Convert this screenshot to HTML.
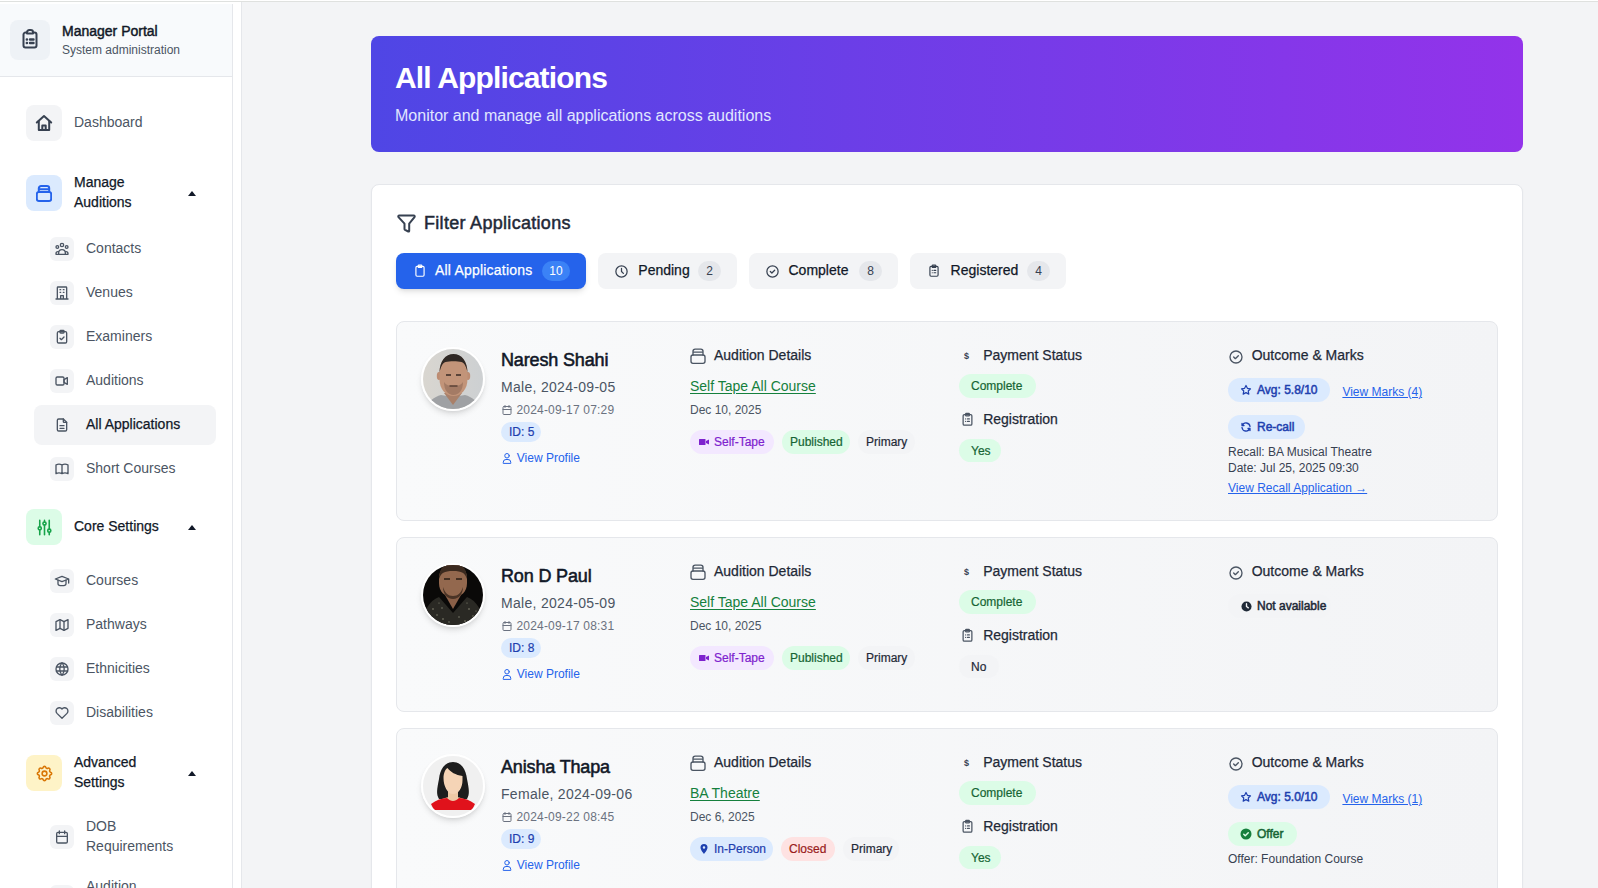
<!DOCTYPE html>
<html><head><meta charset="utf-8">
<style>
*{box-sizing:border-box;margin:0;padding:0}
html,body{width:1598px;height:888px;overflow:hidden;background:#fff;font-family:"Liberation Sans",sans-serif;color:#111827}
.a{position:absolute}
.t{position:absolute;white-space:nowrap;line-height:1}
svg{display:block}
.ic{position:absolute;fill:none;stroke:currentColor;stroke-width:2;stroke-linecap:round;stroke-linejoin:round}
#topline{position:absolute;left:0;top:1px;width:1598px;height:1px;background:#dfe1df}
#side{position:absolute;left:0;top:4px;width:233px;height:884px;border-right:1px solid #e5e7eb;background:#fff}
#shead{position:absolute;left:0;top:4px;width:232px;height:73px;background:#f8fafc;border-bottom:1px solid #e5e7eb}
#main{position:absolute;left:241px;top:2px;width:1357px;height:886px;border-left:1px solid #e5e7eb;background:#f3f4f6}
.nb{position:absolute;left:26px;width:36px;height:36px;border-radius:8px}
.sb{position:absolute;left:50px;width:24px;height:24px;border-radius:6px;background:#f3f4f6;color:#4b5563}
.nt{font-size:14px;color:#4b5563}
.ht{font-size:14px;color:#111827;-webkit-text-stroke:0.25px #111827}
.caret{position:absolute;left:188px;width:0;height:0;border-left:4.5px solid transparent;border-right:4.5px solid transparent;border-bottom:5px solid #111827}

.card{position:absolute;left:396px;width:1102px;border:1px solid #e5e7eb;border-radius:8px;background:linear-gradient(to right,#f9fafb,#f3f4f6)}
.bdg{position:absolute;display:flex;align-items:center;white-space:nowrap;font-size:12px;line-height:1;border-radius:12px;-webkit-text-stroke:0.2px currentColor}
.fb{position:absolute;top:253px;height:36px;border-radius:8px;background:#f3f4f6;color:#374151}
.fbt{position:absolute;top:262.8px;font-size:14px;line-height:1;white-space:nowrap;-webkit-text-stroke:0.25px currentColor}
.cnt{position:absolute;top:261px;height:20px;border-radius:10px;background:#e5e7eb;font-size:12px;line-height:20px;text-align:center;color:#374151}
.hd{font-size:14px;color:#1f2937}
.lnk{text-decoration:underline;text-underline-offset:1.5px}
.av{position:absolute;left:421px;width:64px;height:64px;border-radius:50%;border:2px solid #fff;box-shadow:0 4px 6px -1px rgba(0,0,0,.12),0 2px 4px -2px rgba(0,0,0,.1);overflow:hidden}
.fill{fill:currentColor;stroke:none}
.md{-webkit-text-stroke:0.25px currentColor}
</style></head><body>
<div id="topline"></div>
<div id="side"></div>
<div id="shead"></div>
<div id="main"></div>

<!-- SIDEBAR -->
<div class="a" style="left:10px;top:20px;width:40px;height:40px;border-radius:8px;background:#eef2f6;color:#374151">
  <svg class="ic" style="left:11px;top:9px" width="18" height="20" viewBox="0 0 18 20" stroke-width="2.2"><path d="M6 3.5H4.5A2 2 0 0 0 2.5 5.5v11a2 2 0 0 0 2 2h9a2 2 0 0 0 2-2v-11a2 2 0 0 0-2-2H12"/><path d="M6 4.5V3.3A2.3 2.3 0 0 1 8.3 1h1.4A2.3 2.3 0 0 1 12 3.3v1.2z"/><path d="M5.8 10.5h.2M9 10.5h3.5M5.8 14h.2M9 14h3.5" stroke-width="2.4"/></svg>
</div>
<div class="t" style="left:62px;top:24.4px;font-size:14px;color:#111827;-webkit-text-stroke:0.45px #111827">Manager Portal</div>
<div class="t" style="left:62px;top:43.6px;font-size:12px;color:#4b5563">System administration</div>

<div class="nb" style="top:105px;background:#f3f4f6;color:#374151"><svg class="ic" style="left:9px;top:9px" width="18" height="18" viewBox="0 0 18 18" stroke-width="1.9"><path d="M1.8 8.5L9 2l7.2 6.5"/><path d="M3.8 7v9h10.4V7"/><path d="M7.3 16v-4.5h3.4V16"/></svg></div>
<div class="t nt" style="left:74px;top:115.1px">Dashboard</div>

<div class="nb" style="top:175px;background:#dbeafe;color:#2563eb"><svg class="ic" style="left:10px;top:9.5px" width="16" height="17" viewBox="0 0 16 17" stroke-width="1.6"><rect x="0.8" y="7" width="14.4" height="9" rx="2"/><path d="M2.8 7V3.3A2.3 2.3 0 0 1 5.1 1h5.8a2.3 2.3 0 0 1 2.3 2.3V7M2.8 4.2h10.4"/></svg></div>
<div class="t ht" style="left:74px;top:175.1px">Manage</div>
<div class="t ht" style="left:74px;top:195.1px">Auditions</div>
<div class="caret" style="top:191px"></div>
<!-- submenu 1 -->
<div class="a" style="left:34px;top:405px;width:182px;height:40px;border-radius:8px;background:#f3f4f6"></div>
<div class="sb" style="top:237px"><svg class="ic" style="left:4px;top:4px" width="16" height="16" viewBox="0 0 24 24" stroke-width="1.9"><circle cx="12" cy="6" r="2.5"/><circle cx="5" cy="9" r="2"/><circle cx="19" cy="9" r="2"/><path d="M7 20v-2a5 5 0 0 1 10 0v2zM3 20v-1a3 3 0 0 1 3-3M21 20v-1a3 3 0 0 0-3-3M3 20h18"/></svg></div>
<div class="t nt" style="left:86px;top:241.2px">Contacts</div>
<div class="sb" style="top:281px"><svg class="ic" style="left:4px;top:4px" width="16" height="16" viewBox="0 0 24 24" stroke-width="1.9"><path d="M3 21h18M5 21V4a1 1 0 0 1 1-1h12a1 1 0 0 1 1 1v17M9 7h1M14 7h1M9 11h1M14 11h1M10 21v-5h4v5"/></svg></div>
<div class="t nt" style="left:86px;top:285.2px">Venues</div>
<div class="sb" style="top:325px"><svg class="ic" style="left:4px;top:4px" width="16" height="16" viewBox="0 0 24 24" stroke-width="1.9"><rect x="5" y="4" width="14" height="17" rx="2"/><rect x="9" y="2" width="6" height="4" rx="1"/><path d="M9 14l2 2 4-4"/></svg></div>
<div class="t nt" style="left:86px;top:329.2px">Examiners</div>
<div class="sb" style="top:369px"><svg class="ic" style="left:4px;top:4px" width="16" height="16" viewBox="0 0 24 24" stroke-width="1.9"><path d="M15 10l5-3v10l-5-3z"/><rect x="3" y="6" width="12" height="12" rx="2"/></svg></div>
<div class="t nt" style="left:86px;top:373.2px">Auditions</div>
<div class="sb" style="top:413px"><svg class="ic" style="left:4px;top:4px" width="16" height="16" viewBox="0 0 24 24" stroke-width="1.9"><path d="M14 3v4a1 1 0 0 0 1 1h4"/><path d="M17 21H7a2 2 0 0 1-2-2V5a2 2 0 0 1 2-2h7l5 5v11a2 2 0 0 1-2 2zM9 13h6M9 17h6"/></svg></div>
<div class="t" style="left:86px;top:417.2px;font-size:14px;color:#111827;-webkit-text-stroke:0.25px #111827">All Applications</div>
<div class="sb" style="top:457px"><svg class="ic" style="left:4px;top:4px" width="16" height="16" viewBox="0 0 24 24" stroke-width="1.9"><path d="M3 19a9 9 0 0 1 9 0 9 9 0 0 1 9 0M3 6a9 9 0 0 1 9 0 9 9 0 0 1 9 0M3 6v13M12 6v13M21 6v13"/></svg></div>
<div class="t nt" style="left:86px;top:461.2px">Short Courses</div>

<div class="nb" style="top:509px;background:#dcfce7;color:#16a34a"><svg class="ic" style="left:8.5px;top:8.5px" width="19" height="19" viewBox="0 0 24 24" stroke-width="1.8"><path d="M6 3v8M6 15v6M12 3v2M12 9v12M18 3v11M18 18v3"/><circle cx="6" cy="13" r="2"/><circle cx="12" cy="7" r="2"/><circle cx="18" cy="16" r="2"/></svg></div>
<div class="t ht" style="left:74px;top:518.8px">Core Settings</div>
<div class="caret" style="top:525px"></div>

<div class="sb" style="top:569px"><svg class="ic" style="left:4px;top:4px" width="16" height="16" viewBox="0 0 24 24" stroke-width="1.9"><path d="M22 9L12 5 2 9l10 4 10-4v6"/><path d="M6 10.6V16a6 3 0 0 0 12 0v-5.4"/></svg></div>
<div class="t nt" style="left:86px;top:572.8px">Courses</div>
<div class="sb" style="top:613px"><svg class="ic" style="left:4px;top:4px" width="16" height="16" viewBox="0 0 24 24" stroke-width="1.9"><path d="M3 7l6-3 6 3 6-3v13l-6 3-6-3-6 3z"/><path d="M9 4v13M15 7v13"/></svg></div>
<div class="t nt" style="left:86px;top:616.8px">Pathways</div>
<div class="sb" style="top:657px"><svg class="ic" style="left:4px;top:4px" width="16" height="16" viewBox="0 0 24 24" stroke-width="1.9"><circle cx="12" cy="12" r="9"/><path d="M3.6 9h16.8M3.6 15h16.8M11.5 3a17 17 0 0 0 0 18M12.5 3a17 17 0 0 1 0 18"/></svg></div>
<div class="t nt" style="left:86px;top:660.8px">Ethnicities</div>
<div class="sb" style="top:701px"><svg class="ic" style="left:4px;top:4px" width="16" height="16" viewBox="0 0 24 24" stroke-width="1.9"><path d="M19.5 12.6L12 20l-7.5-7.4A5 5 0 1 1 12 6a5 5 0 1 1 7.5 6.6"/></svg></div>
<div class="t nt" style="left:86px;top:704.8px">Disabilities</div>

<div class="nb" style="top:755px;background:#fef3c7;color:#d97706"><svg class="ic" style="left:8.5px;top:8.5px" width="19" height="19" viewBox="0 0 24 24" stroke-width="1.8"><path d="M10.3 4.3c.4-1.8 3-1.8 3.4 0a1.7 1.7 0 0 0 2.6 1.1c1.5-.9 3.3.8 2.4 2.4a1.7 1.7 0 0 0 1 2.5c1.8.4 1.8 3 0 3.4a1.7 1.7 0 0 0-1 2.6c.9 1.5-.9 3.3-2.4 2.4a1.7 1.7 0 0 0-2.6 1c-.4 1.8-3 1.8-3.4 0a1.7 1.7 0 0 0-2.6-1c-1.5.9-3.3-.9-2.4-2.4a1.7 1.7 0 0 0-1-2.6c-1.8-.4-1.8-3 0-3.4a1.7 1.7 0 0 0 1-2.5c-.9-1.6.9-3.3 2.4-2.4a1.7 1.7 0 0 0 2.6-1.1z"/><circle cx="12" cy="12" r="3"/></svg></div>
<div class="t ht" style="left:74px;top:754.9px">Advanced</div>
<div class="t ht" style="left:74px;top:774.9px">Settings</div>
<div class="caret" style="top:771px"></div>

<div class="sb" style="top:825px"><svg class="ic" style="left:4px;top:4px" width="16" height="16" viewBox="0 0 24 24" stroke-width="1.9"><rect x="4" y="5" width="16" height="16" rx="2"/><path d="M16 3v4M8 3v4M4 11h16"/></svg></div>
<div class="t nt" style="left:86px;top:819px">DOB</div>
<div class="t nt" style="left:86px;top:838.6px">Requirements</div>
<div class="sb" style="top:885px"></div>
<div class="t nt" style="left:86px;top:879.2px">Audition</div>

<!-- MAIN -->
<div class="a" style="left:371px;top:36px;width:1152px;height:116px;border-radius:8px;background:linear-gradient(to right,#4f46e5,#9333ea)"></div>
<div class="t" style="left:395px;top:62.61px;font-size:30px;font-weight:bold;color:#fff;letter-spacing:-0.85px">All Applications</div>
<div class="t" style="left:395px;top:108.46px;font-size:16px;color:#e0e7ff">Monitor and manage all applications across auditions</div>
<div class="a" style="left:371px;top:184px;width:1152px;height:720px;border-radius:8px;background:#fff;border:1px solid #e5e7eb;box-shadow:0 1px 2px rgba(0,0,0,.04)"></div>
<svg class="ic" style="left:396.5px;top:213.5px;color:#374151" width="19" height="19" viewBox="0 0 19 19" stroke-width="1.7"><path d="M2.3 1.5h14.4a1 1 0 0 1 .8 1.6l-5.3 6.6v7.3a.6.6 0 0 1-.9.5L8 15.8a1 1 0 0 1-.5-.9V9.7L1.5 3.1a1 1 0 0 1 .8-1.6z"/></svg>
<div class="t" style="left:424px;top:213.56px;font-size:18px;color:#1f2937;-webkit-text-stroke:0.5px #1f2937;letter-spacing:0.3px">Filter Applications</div>
<div class="fb" style="left:396px;width:190px;background:#2563eb;box-shadow:0 4px 6px -1px rgba(0,0,0,.1),0 2px 4px -2px rgba(0,0,0,.1)"></div>
<svg class="ic" style="left:413px;top:264px;color:#fff" width="14" height="14" viewBox="0 0 24 24"><rect x="5" y="4" width="14" height="17" rx="2"/><rect x="9" y="2" width="6" height="4" rx="1"/></svg>
<div class="fbt" style="left:435px;color:#fff;letter-spacing:0.2px">All Applications</div>
<div class="cnt" style="left:542px;width:28px;background:#3b82f6;color:#fff">10</div>
<div class="fb" style="left:598px;width:139px"></div>
<svg class="ic" style="left:614px;top:264px;color:#374151" width="15" height="15" viewBox="0 0 24 24" stroke-width="2.2"><circle cx="12" cy="12" r="9"/><path d="M12 7v5l3 3"/></svg>
<div class="fbt" style="left:638.3px">Pending</div>
<div class="cnt" style="left:698px;width:23px">2</div>
<div class="fb" style="left:749px;width:149px"></div>
<svg class="ic" style="left:765px;top:264px;color:#374151" width="15" height="15" viewBox="0 0 24 24" stroke-width="2.2"><circle cx="12" cy="12" r="9"/><path d="M8.5 12l2.5 2.5 4.5-4.5"/></svg>
<div class="fbt" style="left:788.5px">Complete</div>
<div class="cnt" style="left:859px;width:23px">8</div>
<div class="fb" style="left:910px;width:156px"></div>
<svg class="ic" style="left:927px;top:264px;color:#374151" width="14" height="14" viewBox="0 0 24 24" stroke-width="2.2"><rect x="5" y="4" width="14" height="17" rx="2"/><rect x="9" y="2" width="6" height="4" rx="1"/><path d="M9 11h.01M12 11h3M9 15h.01M12 15h3"/></svg>
<div class="fbt" style="left:950.6px">Registered</div>
<div class="cnt" style="left:1027px;width:23px">4</div>
<div class="card" style="top:321px;height:200px"></div>
<div class="av" style="top:346.5px"><svg width="60" height="60" viewBox="0 0 60 60"><defs><linearGradient id="g1" x1="0" x2="1"><stop offset="0" stop-color="#d9d6d0"/><stop offset="1" stop-color="#cdd0d2"/></linearGradient></defs><rect width="60" height="60" fill="url(#g1)"/>
<path d="M4 60c1-8 7-12 14-14l12 2 12-2c7 2 13 6 14 14z" fill="#9fa1a4"/>
<path d="M21 44l9 12 9-12z" fill="#a98069"/>
<ellipse cx="16" cy="27" rx="2.2" ry="4" fill="#bd8c72"/><ellipse cx="45" cy="27" rx="2.2" ry="4" fill="#bd8c72"/>
<path d="M16.5 24c0-12 6-18 14-18s14 6 14 18v6c0 10-6 17-14 17s-14-7-14-17z" fill="#c29479"/>
<path d="M16.5 24c0-12 6-19 14-19s14 7 14 19c-1-6-3-10-6-11-4-1-12-1-16 0-3 1-5 5-6 11z" fill="#2f2824"/>
<path d="M21 33c2 3 5 4 9.5 4s7.5-1 9.5-4c0 8-4 13-9.5 13S21 41 21 33z" fill="#8f6a58" opacity=".6"/><path d="M26.5 37h8" stroke="#5a4036" stroke-width="1.3"/>
<path d="M23 26h5M33 26h5" stroke="#3a2a24" stroke-width="1.6"/>
</svg></div>
<div class="t" style="left:501px;top:350.56px;font-size:18px;color:#111827;-webkit-text-stroke:0.55px #111827;letter-spacing:-0.15px">Naresh Shahi</div>
<div class="t" style="left:501px;top:379.95px;font-size:14px;color:#4b5563;letter-spacing:0.3px">Male, 2024-09-05</div>
<svg class="ic" style="left:501px;top:404px;color:#6b7280" width="12" height="12" viewBox="0 0 24 24" stroke-width="2"><rect x="4" y="5" width="16" height="16" rx="2"/><path d="M16 3v4M8 3v4M4 11h16"/></svg>
<div class="t" style="left:516.4px;top:403.84px;font-size:12px;color:#6b7280;letter-spacing:0.2px">2024-09-17 07:29</div>
<div class="bdg" style="left:501px;top:422px;width:40px;height:20px;background:#dbeafe;color:#1e40af;padding-left:8px;border-radius:10.0px"><span>ID: 5</span></div>
<svg class="ic" style="left:501px;top:452px;color:#2563eb" width="12" height="12" viewBox="0 0 24 24" stroke-width="2"><circle cx="12" cy="7.5" r="4.5"/><path d="M4.5 22v-1.5a5.5 5.5 0 0 1 5.5-5.5h4a5.5 5.5 0 0 1 5.5 5.5V22z"/></svg>
<div class="t" style="left:516.8px;top:451.74px;font-size:12px;color:#2563eb">View Profile</div>
<svg class="ic" style="left:690px;top:348px;color:#4b5563" width="16" height="16" viewBox="0 0 24 24" stroke-width="2"><rect x="1.5" y="10.5" width="21" height="12.5" rx="3"/><path d="M4.5 10.5V5a3.3 3.3 0 0 1 3.3-3.3h8.4A3.3 3.3 0 0 1 19.5 5v5.5M4.5 6.3h15"/></svg>
<div class="t" style="left:714px;top:348.25px;font-size:14px;color:#1f2937;-webkit-text-stroke:0.25px #1f2937">Audition Details</div>
<div class="t" style="left:690px;top:378.85px;font-size:14px;color:#15803d;text-decoration:underline;text-underline-offset:2px">Self Tape All Course</div>
<div class="t" style="left:690px;top:403.84px;font-size:12px;color:#4b5563">Dec 10, 2025</div>
<div class="bdg" style="left:690px;top:430px;width:84px;height:24px;background:#f3e8ff;color:#7e22ce;padding-left:8px;border-radius:12.0px"><svg width="12" height="12" viewBox="0 0 24 24" style="margin-right:4px"><rect x="2" y="6" width="13" height="12" rx="1" fill="currentColor"/><path d="M16 10l6-3v10l-6-3z" fill="currentColor"/></svg><span>Self-Tape</span></div>
<div class="bdg" style="left:782px;top:430px;width:68px;height:24px;background:#dcfce7;color:#166534;padding-left:8px;border-radius:12.0px"><span>Published</span></div>
<div class="bdg" style="left:858px;top:430px;width:57px;height:24px;background:#f3f4f6;color:#1f2937;padding-left:8px;border-radius:12.0px"><span>Primary</span></div>
<div class="t" style="left:964px;top:351.68px;font-size:9px;font-weight:bold;color:#374151">$</div>
<div class="t" style="left:983.2px;top:348.25px;font-size:14px;color:#1f2937;-webkit-text-stroke:0.25px #1f2937">Payment Status</div>
<div class="bdg" style="left:959px;top:374px;width:77px;height:24px;background:#dcfce7;color:#166534;padding-left:12px;border-radius:12.0px"><span>Complete</span></div>
<svg class="ic" style="left:960px;top:412px;color:#4b5563" width="15" height="15" viewBox="0 0 24 24" stroke-width="2"><rect x="5" y="4" width="14" height="17" rx="2"/><rect x="9" y="2" width="6" height="4" rx="1"/><path d="M9 11h.01M12 11h3M9 15h.01M12 15h3"/></svg>
<div class="t" style="left:983.2px;top:412.25px;font-size:14px;color:#1f2937;-webkit-text-stroke:0.25px #1f2937">Registration</div>
<div class="bdg" style="left:959px;top:439px;width:42px;height:23px;background:#dcfce7;color:#166534;padding-left:12px;border-radius:11.5px"><span>Yes</span></div>
<svg class="ic" style="left:1228px;top:348.5px;color:#4b5563" width="16" height="16" viewBox="0 0 24 24" stroke-width="1.8"><circle cx="12" cy="12" r="9"/><path d="M8.5 12l2.5 2.5 4.5-4.5"/></svg>
<div class="t" style="left:1251.7px;top:347.95px;font-size:14px;color:#1f2937;-webkit-text-stroke:0.25px #1f2937">Outcome &amp; Marks</div>
<div class="bdg" style="left:1228px;top:378px;width:102px;height:24px;background:#dbeafe;color:#1e40af;-webkit-text-stroke:0.5px currentColor;padding-left:12px;border-radius:12.0px"><svg width="12" height="12" viewBox="0 0 24 24" style="margin-right:5px;fill:none;stroke:currentColor;stroke-width:2.4;stroke-linejoin:round"><path d="M12 3l2.8 5.7 6.2.9-4.5 4.4 1.1 6.2L12 17.3 6.4 20.2l1.1-6.2L3 9.6l6.2-.9z"/></svg><span>Avg: 5.8/10</span></div>
<div class="t" style="left:1342.4px;top:386.04px;font-size:12px;color:#2563eb;text-decoration:underline;text-underline-offset:1px">View Marks (4)</div>
<div class="bdg" style="left:1228px;top:415px;width:77px;height:24px;background:#dbeafe;color:#1e40af;-webkit-text-stroke:0.5px currentColor;padding-left:12px;border-radius:12.0px"><svg width="12" height="12" viewBox="0 0 24 24" style="margin-right:5px;fill:none;stroke:currentColor;stroke-width:2.6;stroke-linecap:round;stroke-linejoin:round"><path d="M20 11A8 8 0 0 0 4.6 9M4 5v4h4M4 13a8 8 0 0 0 15.4 2M20 19v-4h-4"/></svg><span>Re-call</span></div>
<div class="t" style="left:1228px;top:445.54px;font-size:12px;color:#374151">Recall: BA Musical Theatre</div>
<div class="t" style="left:1228px;top:462.14px;font-size:12px;color:#374151">Date: Jul 25, 2025 09:30</div>
<div class="t" style="left:1228px;top:481.54px;font-size:12px;color:#2563eb;text-decoration:underline;text-underline-offset:1px">View Recall Application →</div>
<div class="card" style="top:537px;height:175px"></div>
<div class="av" style="top:562.5px"><svg width="60" height="60" viewBox="0 0 60 60"><rect width="60" height="60" fill="#0a0908"/>
<path d="M0 60c0-14 6-24 16-28l14 16 14-16c10 4 16 14 16 28z" fill="#2a2924"/>
<g fill="#8c8a78"><circle cx="10" cy="44" r=".8"/><circle cx="14" cy="50" r=".7"/><circle cx="8" cy="55" r=".8"/><circle cx="19" cy="43" r=".7"/><circle cx="20" cy="54" r=".8"/><circle cx="46" cy="44" r=".8"/><circle cx="50" cy="51" r=".7"/><circle cx="42" cy="56" r=".8"/><circle cx="53" cy="46" r=".6"/><circle cx="26" cy="57" r=".7"/><circle cx="36" cy="52" r=".7"/><circle cx="16" cy="38" r=".6"/><circle cx="44" cy="38" r=".6"/></g>
<path d="M22 30l8 14 8-14z" fill="#8a5f47"/>
<path d="M16 14c0-10 6-15 14-15s14 5 14 15v4c0 9-6 14-14 14s-14-5-14-14z" fill="#93684e"/>
<path d="M16 14c0-10 5-16 14-16s14 6 14 16c-2-6-5-8-14-8s-12 2-14 8z" fill="#3b2a1f"/>
<path d="M20 22c2 6 5 9 10 9s8-3 10-9c0 7-4 12-10 12s-10-5-10-12z" fill="#4b3426"/>
<path d="M21 14h6M33 14h6" stroke="#2a1c14" stroke-width="1.4"/>
</svg></div>
<div class="t" style="left:501px;top:566.56px;font-size:18px;color:#111827;-webkit-text-stroke:0.55px #111827;letter-spacing:-0.15px">Ron D Paul</div>
<div class="t" style="left:501px;top:595.95px;font-size:14px;color:#4b5563;letter-spacing:0.3px">Male, 2024-05-09</div>
<svg class="ic" style="left:501px;top:620px;color:#6b7280" width="12" height="12" viewBox="0 0 24 24" stroke-width="2"><rect x="4" y="5" width="16" height="16" rx="2"/><path d="M16 3v4M8 3v4M4 11h16"/></svg>
<div class="t" style="left:516.4px;top:619.84px;font-size:12px;color:#6b7280;letter-spacing:0.2px">2024-09-17 08:31</div>
<div class="bdg" style="left:501px;top:638px;width:40px;height:20px;background:#dbeafe;color:#1e40af;padding-left:8px;border-radius:10.0px"><span>ID: 8</span></div>
<svg class="ic" style="left:501px;top:668px;color:#2563eb" width="12" height="12" viewBox="0 0 24 24" stroke-width="2"><circle cx="12" cy="7.5" r="4.5"/><path d="M4.5 22v-1.5a5.5 5.5 0 0 1 5.5-5.5h4a5.5 5.5 0 0 1 5.5 5.5V22z"/></svg>
<div class="t" style="left:516.8px;top:667.74px;font-size:12px;color:#2563eb">View Profile</div>
<svg class="ic" style="left:690px;top:564px;color:#4b5563" width="16" height="16" viewBox="0 0 24 24" stroke-width="2"><rect x="1.5" y="10.5" width="21" height="12.5" rx="3"/><path d="M4.5 10.5V5a3.3 3.3 0 0 1 3.3-3.3h8.4A3.3 3.3 0 0 1 19.5 5v5.5M4.5 6.3h15"/></svg>
<div class="t" style="left:714px;top:564.25px;font-size:14px;color:#1f2937;-webkit-text-stroke:0.25px #1f2937">Audition Details</div>
<div class="t" style="left:690px;top:594.85px;font-size:14px;color:#15803d;text-decoration:underline;text-underline-offset:2px">Self Tape All Course</div>
<div class="t" style="left:690px;top:619.84px;font-size:12px;color:#4b5563">Dec 10, 2025</div>
<div class="bdg" style="left:690px;top:646px;width:84px;height:24px;background:#f3e8ff;color:#7e22ce;padding-left:8px;border-radius:12.0px"><svg width="12" height="12" viewBox="0 0 24 24" style="margin-right:4px"><rect x="2" y="6" width="13" height="12" rx="1" fill="currentColor"/><path d="M16 10l6-3v10l-6-3z" fill="currentColor"/></svg><span>Self-Tape</span></div>
<div class="bdg" style="left:782px;top:646px;width:68px;height:24px;background:#dcfce7;color:#166534;padding-left:8px;border-radius:12.0px"><span>Published</span></div>
<div class="bdg" style="left:858px;top:646px;width:57px;height:24px;background:#f3f4f6;color:#1f2937;padding-left:8px;border-radius:12.0px"><span>Primary</span></div>
<div class="t" style="left:964px;top:567.68px;font-size:9px;font-weight:bold;color:#374151">$</div>
<div class="t" style="left:983.2px;top:564.25px;font-size:14px;color:#1f2937;-webkit-text-stroke:0.25px #1f2937">Payment Status</div>
<div class="bdg" style="left:959px;top:590px;width:77px;height:24px;background:#dcfce7;color:#166534;padding-left:12px;border-radius:12.0px"><span>Complete</span></div>
<svg class="ic" style="left:960px;top:628px;color:#4b5563" width="15" height="15" viewBox="0 0 24 24" stroke-width="2"><rect x="5" y="4" width="14" height="17" rx="2"/><rect x="9" y="2" width="6" height="4" rx="1"/><path d="M9 11h.01M12 11h3M9 15h.01M12 15h3"/></svg>
<div class="t" style="left:983.2px;top:628.25px;font-size:14px;color:#1f2937;-webkit-text-stroke:0.25px #1f2937">Registration</div>
<div class="bdg" style="left:959px;top:655px;width:40px;height:23px;background:#f3f4f6;color:#1f2937;padding-left:12px;border-radius:11.5px"><span>No</span></div>
<svg class="ic" style="left:1228px;top:564.5px;color:#4b5563" width="16" height="16" viewBox="0 0 24 24" stroke-width="1.8"><circle cx="12" cy="12" r="9"/><path d="M8.5 12l2.5 2.5 4.5-4.5"/></svg>
<div class="t" style="left:1251.7px;top:563.95px;font-size:14px;color:#1f2937;-webkit-text-stroke:0.25px #1f2937">Outcome &amp; Marks</div>
<div class="bdg" style="left:1228px;top:594px;width:103px;height:24px;background:#f3f4f6;color:#1f2937;-webkit-text-stroke:0.5px currentColor;padding-left:13px;border-radius:12.0px"><svg width="11" height="11" viewBox="0 0 24 24" style="margin-right:5px"><circle cx="12" cy="12" r="11" fill="currentColor"/><path d="M12 6v6l4 3" stroke="#f3f4f6" stroke-width="3" fill="none" stroke-linecap="round"/></svg><span>Not available</span></div>
<div class="card" style="top:728px;height:200px"></div>
<div class="av" style="top:753.5px"><svg width="60" height="60" viewBox="0 0 60 60"><rect width="60" height="60" fill="#f0f0f0"/>
<path d="M16 43c-3-5-2-10 0-20 1-10 6-17 14-17s13 7 14 17c2 10 3 15 0 20z" fill="#1d1d1d"/>
<path d="M10 50c3-5 10-8 16-9h8c6 1 13 4 16 9z" fill="#efcaa6"/>
<rect x="25" y="32" width="10" height="12" fill="#efcaa6"/>
<path d="M20.5 22c0-5 2-9 4-10 3 4 8 7 15 8v4c0 8-4 14-9.5 14S20.5 30 20.5 22z" fill="#f5d4b6"/>
<path d="M8 48c5-4 11-6 16-6 2 2 4 3 6 3s4-1 6-3c5 0 11 2 16 6l-3 6H11z" fill="#e0121b"/>
</svg></div>
<div class="t" style="left:501px;top:757.56px;font-size:18px;color:#111827;-webkit-text-stroke:0.55px #111827;letter-spacing:-0.15px">Anisha Thapa</div>
<div class="t" style="left:501px;top:786.95px;font-size:14px;color:#4b5563;letter-spacing:0.3px">Female, 2024-09-06</div>
<svg class="ic" style="left:501px;top:811px;color:#6b7280" width="12" height="12" viewBox="0 0 24 24" stroke-width="2"><rect x="4" y="5" width="16" height="16" rx="2"/><path d="M16 3v4M8 3v4M4 11h16"/></svg>
<div class="t" style="left:516.4px;top:810.84px;font-size:12px;color:#6b7280;letter-spacing:0.2px">2024-09-22 08:45</div>
<div class="bdg" style="left:501px;top:829px;width:40px;height:20px;background:#dbeafe;color:#1e40af;padding-left:8px;border-radius:10.0px"><span>ID: 9</span></div>
<svg class="ic" style="left:501px;top:859px;color:#2563eb" width="12" height="12" viewBox="0 0 24 24" stroke-width="2"><circle cx="12" cy="7.5" r="4.5"/><path d="M4.5 22v-1.5a5.5 5.5 0 0 1 5.5-5.5h4a5.5 5.5 0 0 1 5.5 5.5V22z"/></svg>
<div class="t" style="left:516.8px;top:858.74px;font-size:12px;color:#2563eb">View Profile</div>
<svg class="ic" style="left:690px;top:755px;color:#4b5563" width="16" height="16" viewBox="0 0 24 24" stroke-width="2"><rect x="1.5" y="10.5" width="21" height="12.5" rx="3"/><path d="M4.5 10.5V5a3.3 3.3 0 0 1 3.3-3.3h8.4A3.3 3.3 0 0 1 19.5 5v5.5M4.5 6.3h15"/></svg>
<div class="t" style="left:714px;top:755.25px;font-size:14px;color:#1f2937;-webkit-text-stroke:0.25px #1f2937">Audition Details</div>
<div class="t" style="left:690px;top:785.85px;font-size:14px;color:#15803d;text-decoration:underline;text-underline-offset:2px">BA Theatre</div>
<div class="t" style="left:690px;top:810.84px;font-size:12px;color:#4b5563">Dec 6, 2025</div>
<div class="bdg" style="left:690px;top:837px;width:83px;height:24px;background:#dbeafe;color:#1e40af;padding-left:8px;border-radius:12.0px"><svg width="12" height="12" viewBox="0 0 24 24" style="margin-right:4px"><path d="M12 2a7 7 0 0 0-7 7c0 5 7 13 7 13s7-8 7-13a7 7 0 0 0-7-7zm0 9.5a2.5 2.5 0 1 1 0-5 2.5 2.5 0 0 1 0 5z" fill="currentColor"/></svg><span>In-Person</span></div>
<div class="bdg" style="left:781px;top:837px;width:54px;height:24px;background:#fee2e2;color:#991b1b;padding-left:8px;border-radius:12.0px"><span>Closed</span></div>
<div class="bdg" style="left:843px;top:837px;width:56px;height:24px;background:#f3f4f6;color:#1f2937;padding-left:8px;border-radius:12.0px"><span>Primary</span></div>
<div class="t" style="left:964px;top:758.68px;font-size:9px;font-weight:bold;color:#374151">$</div>
<div class="t" style="left:983.2px;top:755.25px;font-size:14px;color:#1f2937;-webkit-text-stroke:0.25px #1f2937">Payment Status</div>
<div class="bdg" style="left:959px;top:781px;width:77px;height:24px;background:#dcfce7;color:#166534;padding-left:12px;border-radius:12.0px"><span>Complete</span></div>
<svg class="ic" style="left:960px;top:819px;color:#4b5563" width="15" height="15" viewBox="0 0 24 24" stroke-width="2"><rect x="5" y="4" width="14" height="17" rx="2"/><rect x="9" y="2" width="6" height="4" rx="1"/><path d="M9 11h.01M12 11h3M9 15h.01M12 15h3"/></svg>
<div class="t" style="left:983.2px;top:819.25px;font-size:14px;color:#1f2937;-webkit-text-stroke:0.25px #1f2937">Registration</div>
<div class="bdg" style="left:959px;top:846px;width:42px;height:23px;background:#dcfce7;color:#166534;padding-left:12px;border-radius:11.5px"><span>Yes</span></div>
<svg class="ic" style="left:1228px;top:755.5px;color:#4b5563" width="16" height="16" viewBox="0 0 24 24" stroke-width="1.8"><circle cx="12" cy="12" r="9"/><path d="M8.5 12l2.5 2.5 4.5-4.5"/></svg>
<div class="t" style="left:1251.7px;top:754.95px;font-size:14px;color:#1f2937;-webkit-text-stroke:0.25px #1f2937">Outcome &amp; Marks</div>
<div class="bdg" style="left:1228px;top:785px;width:102px;height:24px;background:#dbeafe;color:#1e40af;-webkit-text-stroke:0.5px currentColor;padding-left:12px;border-radius:12.0px"><svg width="12" height="12" viewBox="0 0 24 24" style="margin-right:5px;fill:none;stroke:currentColor;stroke-width:2.4;stroke-linejoin:round"><path d="M12 3l2.8 5.7 6.2.9-4.5 4.4 1.1 6.2L12 17.3 6.4 20.2l1.1-6.2L3 9.6l6.2-.9z"/></svg><span>Avg: 5.0/10</span></div>
<div class="t" style="left:1342.4px;top:793.04px;font-size:12px;color:#2563eb;text-decoration:underline;text-underline-offset:1px">View Marks (1)</div>
<div class="bdg" style="left:1228px;top:822px;width:69px;height:24px;background:#dcfce7;color:#166534;-webkit-text-stroke:0.5px currentColor;padding-left:12px;border-radius:12.0px"><svg width="12" height="12" viewBox="0 0 24 24" style="margin-right:5px"><circle cx="12" cy="12" r="11" fill="#15803d"/><path d="M7.5 12.5l3 3 6-6" stroke="#dcfce7" stroke-width="3" fill="none" stroke-linecap="round" stroke-linejoin="round"/></svg><span>Offer</span></div>
<div class="t" style="left:1228px;top:852.54px;font-size:12px;color:#374151">Offer: Foundation Course</div>
</body></html>
